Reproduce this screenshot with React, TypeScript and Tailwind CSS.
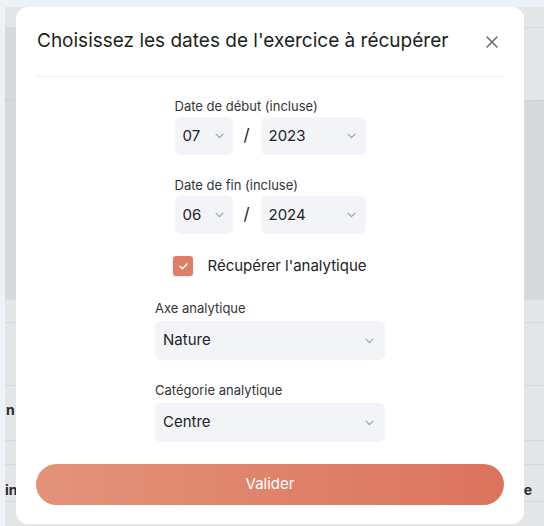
import { useState } from 'react';

const font = { fontFamily: 'Inter, "Noto Sans", sans-serif' };

function Chevron() {
  return (
    <svg width="9" height="6" viewBox="0 0 9 6" fill="none" className="shrink-0">
      <path d="M1 1.2L4.5 4.6L8 1.2" stroke="#9a9ca3" strokeWidth="1.1" strokeLinecap="round" strokeLinejoin="round" />
    </svg>
  );
}

interface SelectBoxProps {
  value: string;
  className: string;
}

function SelectBox({ value, className }: SelectBoxProps) {
  return (
    <div className={`flex items-center justify-between rounded-[6px] bg-[#f3f4f8] pl-[8px] ${className}`}>
      <span className="text-[15px] text-[#222326]">{value}</span>
      <Chevron />
    </div>
  );
}

function DateRow({ label, month, year }: { label: string; month: string; year: string }) {
  return (
    <div className="flex flex-col">
      <span className="text-[13px] leading-[18px] text-[#333438]">{label}</span>
      <div className="mt-[2px] flex items-center">
        <SelectBox value={month} className="h-[38px] w-[58px] pr-[9px]" />
        <span className="w-[28px] text-center text-[17px] text-[#222326]">/</span>
        <SelectBox value={year} className="h-[38px] w-[105px] pr-[10px]" />
      </div>
    </div>
  );
}

function Backdrop() {
  return (
    <div className="absolute inset-0 flex flex-col bg-[#edf2f9]">
      <div className="h-[7px]" />
      <div className="ml-[5px] flex flex-1 flex-col bg-[#e4e5e7]">
        <div className="h-[21px] border-b border-[#d9dadd]" />
        <div className="flex h-[72px]">
          <div className="w-[11px] bg-[#d8d9dc]" />
          <div className="flex-1" />
        </div>
        <div className="h-[200px] border-t border-dashed border-[#c9cacd] bg-[#d8d9dc]" />
        <div className="h-[22px]" />
        <div className="h-[63px] border-t border-[#d6d7da]" />
        <div className="flex h-[55px] items-center border-t border-[#d6d7da] text-[14px] font-bold text-[#2a2b2e]">
          <span className="-mt-[8px] pl-[1px]">n</span>
        </div>
        <div className="h-[24px] border-t border-[#d6d7da]" />
        <div className="flex h-[37px] items-center justify-between border-t border-[#d6d7da] text-[14px] font-bold text-[#2a2b2e]">
          <span className="mt-[12px]">in</span>
          <span className="mt-[12px] pr-[12px]">e</span>
        </div>
        <div className="flex-1 border-t border-[#d6d7da]" />
      </div>
    </div>
  );
}

export default function App() {
  const [checked, setChecked] = useState(true);

  return (
    <div className="relative h-[526px] w-[544px] overflow-hidden" style={font}>
      <Backdrop />

      <div className="absolute left-[16px] top-[7px] flex h-[517px] w-[508px] flex-col rounded-[12px] bg-white">
        <div className="flex items-center justify-between pl-[21px] pr-[26px] pt-[20px]">
          <h2 className="text-[19px] leading-[28px] text-[#1d1e21]">
            Choisissez les dates de l'exercice à récupérer
          </h2>
          <svg width="12" height="12" viewBox="0 0 12 12" className="mt-[1px]">
            <path d="M1 1L11 11M11 1L1 11" stroke="#6b6c70" strokeWidth="1.6" strokeLinecap="round" />
          </svg>
        </div>

        <div className="mx-[21px] mt-[21px] h-px bg-[#f0f1f3]" />

        <div className="flex flex-col items-center pt-[20px]">
          <div className="flex flex-col gap-[21px]">
            <DateRow label="Date de début (incluse)" month="07" year="2023" />
            <DateRow label="Date de fin (incluse)" month="06" year="2024" />
          </div>

          <label className="mt-[22px] flex h-[20px] cursor-pointer items-center gap-[14px]">
            <button
              type="button"
              onClick={() => setChecked(!checked)}
              className={`flex h-[20px] w-[20px] items-center justify-center rounded-[3px] shadow-sm ${checked ? 'bg-[#e07f69]' : 'border border-[#d0d1d5] bg-white'}`}
            >
              {checked && (
                <svg width="9" height="7" viewBox="0 0 9 7" fill="none">
                  <path d="M1 3.6L3.3 5.8L8 1" stroke="white" strokeWidth="1.4" strokeLinecap="round" strokeLinejoin="round" />
                </svg>
              )}
            </button>
            <span className="text-[15px] leading-[20px] text-[#222326]">Récupérer l'analytique</span>
          </label>

          <div className="mt-[23px] flex w-[230px] flex-col">
            <span className="text-[13px] leading-[18px] text-[#333438]">Axe analytique</span>
            <SelectBox value="Nature" className="mt-[4px] h-[39px] w-[230px] pr-[11px]" />
          </div>

          <div className="mt-[21px] flex w-[230px] flex-col">
            <span className="text-[13px] leading-[18px] text-[#333438]">Catégorie analytique</span>
            <SelectBox value="Centre" className="mt-[4px] h-[39px] w-[230px] pr-[11px]" />
          </div>

          <button
            type="button"
            className="mt-[22px] h-[41px] w-[468px] rounded-full bg-gradient-to-r from-[#e3937a] to-[#dc735d] text-[15px] text-white"
          >
            Valider
          </button>
        </div>
      </div>
    </div>
  );
}
